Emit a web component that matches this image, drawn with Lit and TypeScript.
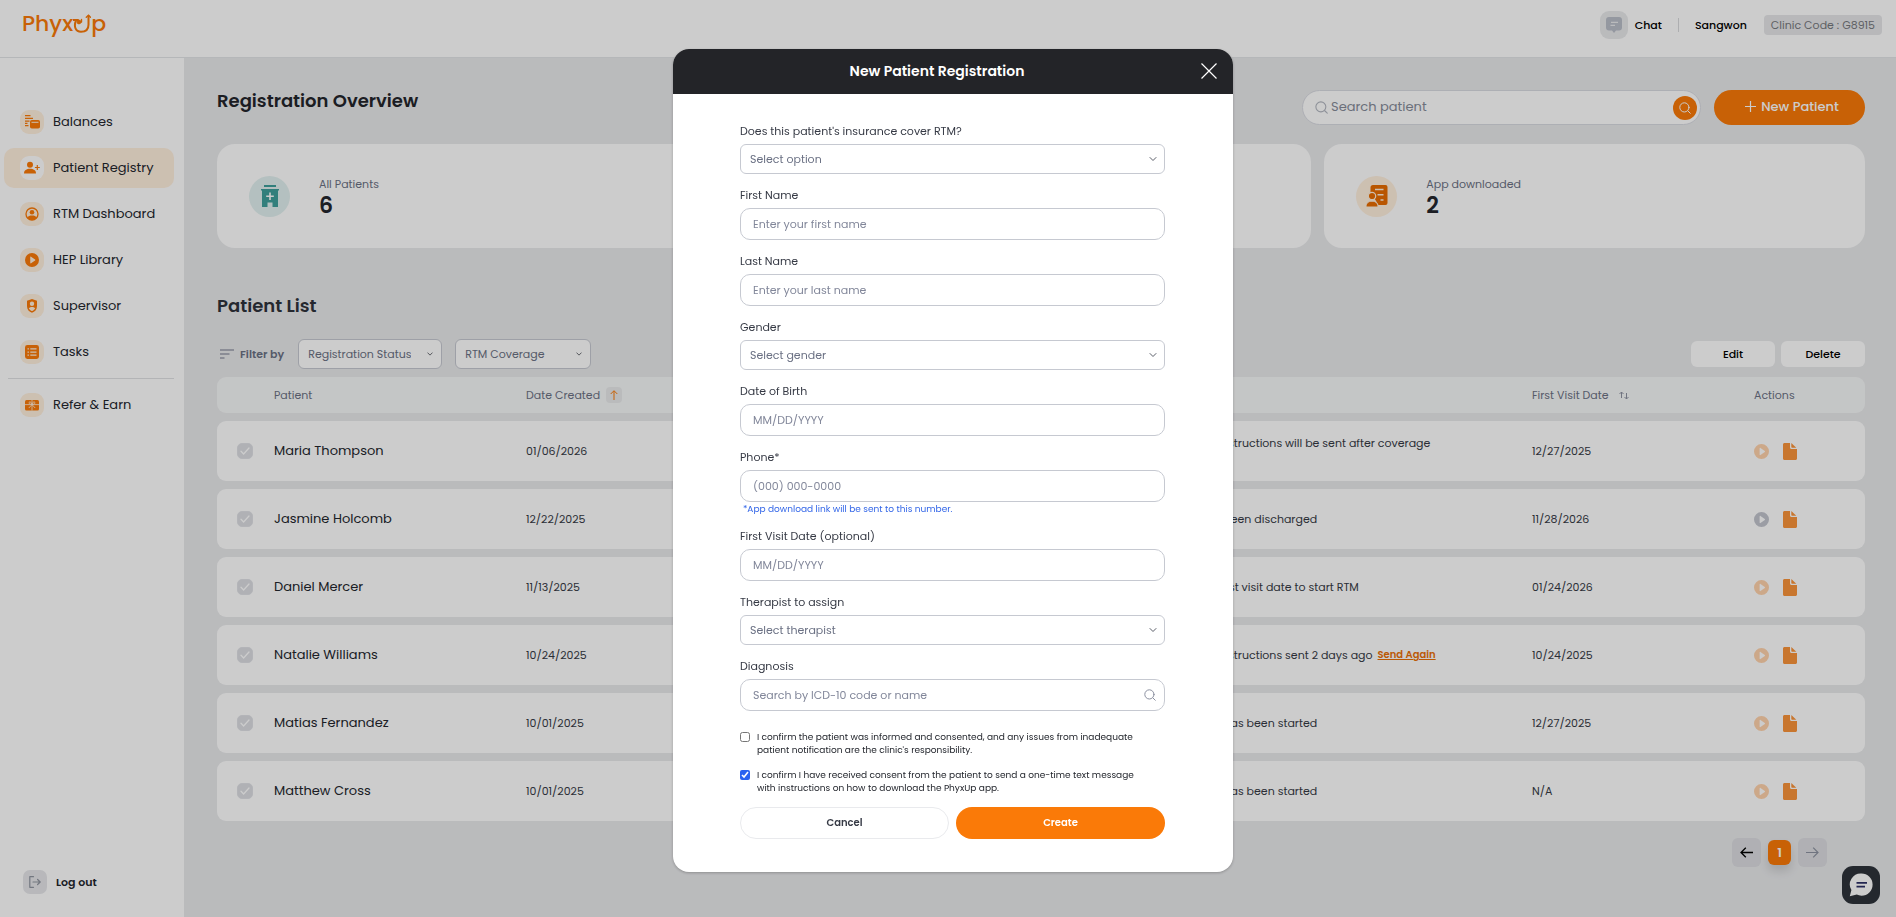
import { LitElement, html, svg, css, nothing, type TemplateResult } from "lit";
import { customElement } from "lit/decorators.js";
import { classMap } from "lit/directives/class-map.js";

interface NavItem {
  label: string;
  icon: TemplateResult;
  active?: boolean;
}

interface Patient {
  name: string;
  created: string;
  status: string;
  visit: string;
  resend?: boolean;
  discharged?: boolean;
}

interface Field {
  id: string;
  label: string;
  kind: "select" | "text" | "search";
  hint: string;
  note?: string;
}

const patients: Patient[] = [
  { name: "Maria Thompson", created: "01/06/2026", status: "App download instructions will be sent after coverage is confirmed", visit: "12/27/2025" },
  { name: "Jasmine Holcomb", created: "12/22/2025", status: "The patient has been discharged", visit: "11/28/2026", discharged: true },
  { name: "Daniel Mercer", created: "11/13/2025", status: "Waiting for the first visit date to start RTM", visit: "01/24/2026" },
  { name: "Natalie Williams", created: "10/24/2025", status: "App download instructions sent 2 days ago", visit: "10/24/2025", resend: true },
  { name: "Matias Fernandez", created: "10/01/2025", status: "RTM monitoring has been started", visit: "12/27/2025" },
  { name: "Matthew Cross", created: "10/01/2025", status: "RTM monitoring has been started", visit: "N/A" },
];

const fields: Field[] = [
  { id: "coverage", label: "Does this patient's insurance cover RTM?", kind: "select", hint: "Select option" },
  { id: "first", label: "First Name", kind: "text", hint: "Enter your first name" },
  { id: "last", label: "Last Name", kind: "text", hint: "Enter your last name" },
  { id: "gender", label: "Gender", kind: "select", hint: "Select gender" },
  { id: "birth", label: "Date of Birth", kind: "text", hint: "MM/DD/YYYY" },
  { id: "phone", label: "Phone*", kind: "text", hint: "(000) 000-0000", note: "*App download link will be sent to this number." },
  { id: "visit", label: "First Visit Date (optional)", kind: "text", hint: "MM/DD/YYYY" },
  { id: "therapist", label: "Therapist to assign", kind: "select", hint: "Select therapist" },
  { id: "diagnosis", label: "Diagnosis", kind: "search", hint: "Search by ICD-10 code or name" },
];

const icon = (size: number, body: TemplateResult, height = size) =>
  html`<svg width=${size} height=${height} viewBox="0 0 ${size} ${height}" fill="currentColor" aria-hidden="true">${body}</svg>`;

const chevron = (size: number) =>
  html`<svg class="chevron" width=${size} height=${size} viewBox="0 0 8 8" fill="none" stroke="currentColor" stroke-width="1" stroke-linecap="round" stroke-linejoin="round" aria-hidden="true"><path d="M1 2.5 4 5.5 7 2.5" /></svg>`;

const magnifier = (size: number) =>
  html`<svg width=${size} height=${size} viewBox="0 0 12 12" fill="none" stroke="currentColor" stroke-width="1" stroke-linecap="round" aria-hidden="true"><circle cx="5.4" cy="5.4" r="4.6" /><path d="M9 9l2.3 2.3" /></svg>`;

const play = (size: number) =>
  html`<svg width=${size} height=${size} viewBox="0 0 16 16" fill="currentColor" aria-hidden="true"><path fill-rule="evenodd" d="M8 0a8 8 0 1 0 0 16A8 8 0 0 0 8 0ZM6 4.7v6.6c0 .5.5.7.9.5l4.6-3.2c.4-.3.4-.9 0-1.200L6.900 4.200c-.4-.2-.9 0-.9.5Z" /></svg>`;

const navItems: NavItem[] = [
  {
    label: "Balances",
    icon: icon(16, svg`<path d="M1 1h5.500v1.200H1zM1 3.800h8v1.200H1zM1 6.500h4.500v1.200H1zM1 8.800h2.500V10H1zM1 11.100h3.500v1.200H1z"/><rect x="6" y="6" width="10" height="8.600" rx="1.800"/><path d="M7.500 8.300h7" stroke="#fff0de" stroke-width="1"/>`),
  },
  {
    label: "Patient Registry",
    active: true,
    icon: icon(16, svg`<circle cx="6" cy="4.800" r="3"/><path d="M0 13.500c0-3.200 2.600-4.700 6-4.700s6 1.500 6 4.700Z"/><path d="M13.300 5v5M10.900 7.500h4.900" stroke="currentColor" stroke-width="1.200"/>`),
  },
  {
    label: "RTM Dashboard",
    icon: icon(14, svg`<circle cx="7" cy="7" r="6" fill="none" stroke="currentColor" stroke-width="1.300"/><circle cx="7" cy="5.300" r="2.300"/><path d="M2.300 10.800C3 8.900 4.800 8.400 7 8.400s4 .5 4.700 2.400C10.800 12.400 9 13 7 13s-3.800-.6-4.700-2.200Z"/>`),
  },
  { label: "HEP Library", icon: play(14) },
  {
    label: "Supervisor",
    icon: icon(14, svg`<path fill-rule="evenodd" d="M7 0 12 1.800v5.400c0 3.400-2.200 5.600-5 6.600-2.800-1-5-3.200-5-6.600V1.800L7 0Zm0 2.500a2.200 2.200 0 1 0 0 4.400 2.200 2.200 0 0 0 0-4.400ZM3.800 9.200C4.600 10.800 5.700 11.600 7 12c1.300-.4 2.400-1.200 3.200-2.800C9.300 8.300 8.200 8 7 8s-2.300.3-3.200 1.200Z"/>`),
  },
  {
    label: "Tasks",
    icon: icon(14, svg`<path fill-rule="evenodd" d="M2.400 0h9.200A2.400 2.400 0 0 1 14 2.400v9.200a2.400 2.400 0 0 1-2.400 2.400H2.400A2.400 2.400 0 0 1 0 11.600V2.400A2.400 2.400 0 0 1 2.400 0ZM2.500 3.300v1.300h1.400V3.300Zm2.800 0v1.300h6.200V3.300ZM2.500 6.400v1.300h1.400V6.400Zm2.800 0v1.300h6.200V6.400ZM2.500 9.500v1.300h1.400V9.500Zm2.800 0v1.300h6.200V9.500Z"/>`),
  },
];

const referItem: NavItem = {
  label: "Refer & Earn",
  icon: icon(14, svg`<rect x="0" y="2" width="14" height="10.500" rx="1.500"/><path d="M7 2v10.500M0 6.600h14M7 6.600 3.800 10M7 6.600 10.200 10M7 6.300C5 6.300 3.600 5.500 4.100 4.400 4.700 3.300 6.600 4.100 7 6.300c.4-2.200 2.300-3 2.900-1.900C10.400 5.500 9 6.300 7 6.300Z" fill="none" stroke="#fff0de" stroke-width=".8"/>`),
};

@customElement("app-root")
export class AppRoot extends LitElement {
  static styles = css`
    :host {
      --ink: #23262d;
      --text: #363a45;
      --muted: #6b7184;
      --line: #c6c9d1;
      --brand: #fa7a08;
      --canvas: #e9eaec;
      display: block;
      min-height: 100vh;
      font-family: Poppins, Inter, sans-serif;
      font-size: 11px;
      color: var(--ink);
    }
    *, *::before, *::after { box-sizing: border-box; }
    h1, h2, p, ul { margin: 0; padding: 0; }
    button, input, select { font: inherit; color: inherit; margin: 0; }
    button { border: 0; padding: 0; cursor: pointer; display: inline-flex; align-items: center; justify-content: center; background: none; }
    svg { display: block; flex: none; }

    .app { display: flex; flex-direction: column; min-height: 100vh; background: var(--canvas); }
    .topbar { display: flex; align-items: flex-start; justify-content: space-between; height: 58px; padding: 12px 14px 0 22px; background: #fff; border-bottom: 1px solid #e3e5e8; }
    .logo { display: flex; align-items: center; color: var(--brand); font-size: 22px; line-height: 24px; font-weight: 500; }
    .account { display: flex; align-items: center; height: 26px; font-weight: 500; line-height: 18px; color: #000; }
    .chat { gap: 7px; font-weight: 500; }
    .chat-icon { display: grid; place-items: center; width: 28px; height: 28px; border-radius: 9px; background: #e9eaec; color: #b9bec9; }
    .rule { width: 1px; height: 14px; margin: 0 16px; background: #d9dadd; }
    .code { margin-left: 17px; padding: 1px 7px; border-radius: 4px; background: #e6e7e9; color: #76787d; font-weight: 400; }

    .body { flex: 1; display: flex; }
    .sidebar { display: flex; flex-direction: column; justify-content: space-between; width: 184px; padding: 44px 10px 23px 4px; background: #fff; }
    .nav { display: flex; flex-direction: column; gap: 6px; list-style: none; }
    .nav-link { display: flex; align-items: center; gap: 9px; height: 40px; padding: 0 16px; border-radius: 10px; color: var(--ink); text-decoration: none; font-size: 13px; line-height: 20px; }
    .nav-link.active { background: #fff0de; }
    .badge { display: grid; place-items: center; flex: none; width: 24px; height: 24px; border-radius: 9px; background: #fff0de; color: var(--brand); }
    .active .badge { background: #fff; }
    .nav-rule { height: 1px; margin: 0 0 0 4px; background: #e0e2e4; }
    .logout { align-self: flex-start; gap: 9px; margin-left: 19px; font-weight: 600; }
    .logout-icon { display: grid; place-items: center; width: 24px; height: 24px; border-radius: 7px; background: #e6e7ea; color: #9095a0; }

    .main { flex: 1; min-width: 0; padding: 32px 31px 0 33px; }
    .heading { display: flex; justify-content: space-between; align-items: flex-start; }
    .title { font-size: 18px; line-height: 22px; font-weight: 600; color: #23252b; }
    .tools { display: flex; gap: 13px; }
    .search { display: flex; align-items: center; gap: 3px; width: 399px; height: 35px; padding: 0 3px 0 12px; border: 1px solid #d9dbe2; border-radius: 18px; background: #fff; color: #b2b6c0; }
    .search-input { flex: 1; min-width: 0; border: 0; padding: 0 0 2px; background: none; outline: 0; font-size: 13px; color: var(--ink); }
    .search-input::placeholder { color: #868b99; opacity: 1; }
    .search-go { width: 24px; height: 24px; border-radius: 12px; background: var(--brand); color: #fff; }
    .new { gap: 5px; width: 151px; height: 35px; padding: 0 0 2px 5px; border-radius: 18px; background: var(--brand); color: #fff; font-size: 13px; font-weight: 500; }

    .cards { display: grid; grid-template-columns: repeat(3, 1fr); gap: 13px; margin-top: 19px; }
    .card { display: flex; align-items: center; gap: 29px; min-height: 104px; padding: 0 32px; border-radius: 18px; background: #fff; }
    .disc { display: grid; place-items: center; width: 41px; height: 41px; border-radius: 50%; background: #fff0de; color: #e86c00; }
    .disc.teal { background: #e2f1f0; color: #3f9f9c; }
    .card-label { line-height: 18px; color: var(--muted); }
    .card-value { font-size: 22px; line-height: 25px; font-weight: 600; }

    .list-title { margin-top: 47px; color: #2f323b; }
    .filters { display: flex; align-items: center; margin-top: 22px; height: 30px; }
    .filter-by { display: flex; align-items: center; gap: 6px; margin: 0 14px 0 3px; font-weight: 600; color: var(--muted); }
    .picker { display: grid; align-items: center; }
    .picker > * { grid-area: 1 / 1; }
    .picker > .chevron, .picker > .lens { justify-self: end; pointer-events: none; }
    .drop { appearance: none; width: 100%; height: 100%; border: 1px solid var(--line); border-radius: 6px; background: #fff; color: var(--muted); outline: 0; }
    .filter { height: 30px; margin-right: 13px; }
    .filter .drop { padding: 0 30px 0 9px; }
    .filter .chevron { margin-right: 9px; color: #3a3d45; }
    .filter.status { width: 144px; }
    .filter.coverage { width: 136px; }
    .bulk { display: flex; gap: 6px; margin-left: auto; }
    .bulk-button { width: 84px; height: 26px; border-radius: 6px; background: #fff; color: #000; font-weight: 500; }

    .table { width: 100%; table-layout: fixed; border-collapse: separate; border-spacing: 0 8px; }
    .col-check { width: 57px; }
    .col-name { width: 252px; }
    .col-created { width: 249px; }
    .col-status { width: 397px; }
    .col-visit { width: 222px; }
    .col-actions { width: 111px; }
    .table th { height: 36px; padding: 0; background: #f6f8f8; color: var(--muted); font-weight: 400; text-align: left; }
    .table td { height: 60px; padding: 0; background: #fff; color: var(--text); line-height: 16px; }
    .table th:first-child, .table td:first-child { border-radius: 9px 0 0 9px; }
    .table th:last-child, .table td:last-child { border-radius: 0 9px 9px 0; }
    .table .name { font-size: 13px; color: var(--ink); }
    .sort { display: inline-flex; align-items: center; gap: 6px; }
    .sort-on { width: 16px; height: 16px; border-radius: 4px; background: #e9eaec; color: var(--brand); }
    .sort-off { color: #8d92a1; margin-left: 4px; }
    .status-text { display: inline-block; max-width: 300px; vertical-align: middle; }
    .resend { margin-left: 2px; color: #ea6f06; font-size: 10px; font-weight: 600; text-decoration: underline; vertical-align: middle; }
    .tick { display: grid; place-items: center; width: 16px; height: 16px; margin-left: 20px; color: #fff; }
    .tick > * { grid-area: 1 / 1; }
    .tick-box { appearance: none; width: 16px; height: 16px; border: 1px solid #e0e2e7; border-radius: 5px; background: #dcdee3; }
    .actions { display: flex; align-items: center; gap: 14px; }
    .play { color: #ffd3ac; }
    .play.off { color: #c2c5ce; }
    .file { color: #fb943a; }

    .pager { display: flex; justify-content: flex-end; align-items: center; gap: 7px; margin: 9px 38px 40px 0; }
    .page-step { width: 29px; height: 29px; border-radius: 6px; background: #dcdde1; color: #8d92a1; }
    .page-step.ready { color: #000; }
    .page-now { width: 23px; height: 25px; border-radius: 6px; background: var(--brand); color: #fff; font-size: 13px; font-weight: 600; box-shadow: 0 6px 10px #00000020; }

    .launcher { position: fixed; right: 16px; bottom: 13px; width: 38px; height: 38px; border-radius: 11px; background: #2e333a; color: #fff; }

    .overlay { position: fixed; inset: 0; display: flex; align-items: flex-start; justify-content: center; padding: 49px 0 0 10px; background: #00000033; overflow: auto; }
    .dialog { width: 560px; overflow: hidden; border-radius: 16px; background: #fff; box-shadow: 0 1px 3px #00000040; }
    .dialog-head { display: flex; align-items: center; height: 45px; padding: 0 16px 1px 0; background: #232428; color: #fff; }
    .dialog-title { flex: 1; text-align: center; font-size: 14px; line-height: 20px; font-weight: 600; }
    .form { display: flex; flex-direction: column; gap: 12px; padding: 28px 68px 33px 67px; }
    .field { display: flex; flex-direction: column; color: var(--text); }
    .field-label { margin-bottom: 4px; line-height: 18px; }
    .field .drop { height: 30px; padding: 0 24px 0 9px; }
    .field .chevron { margin-right: 8px; color: #5a5e69; }
    .box { width: 100%; height: 32px; border: 1px solid var(--line); border-radius: 10px; padding: 0 12px; background: #fff; outline: 0; }
    .box::placeholder { color: #82879a; opacity: 1; }
    .lens { margin-right: 9px; color: #8b90a0; }
    .note { padding: 2px 0 0 3px; font-size: 9px; line-height: 11px; color: #3467e8; }
    .consents { display: flex; flex-direction: column; gap: 12px; margin-top: 8px; }
    .consent { display: flex; align-items: flex-start; gap: 7px; padding-right: 12px; font-size: 9px; line-height: 13px; }
    .consent-box { flex: none; width: 10px; height: 10px; margin-top: 1px; accent-color: #2962f0; }
    .buttons { display: grid; grid-template-columns: 1fr 1fr; gap: 7px; }
    .pill { height: 32px; border-radius: 16px; font-size: 10px; font-weight: 600; }
    .cancel { border: 1px solid #e9eaed; background: #fff; color: var(--text); }
    .create { background: var(--brand); color: #fff; }
  `;

  private navLink(item: NavItem) {
    return html`<li>
      <a class=${classMap({ "nav-link": true, active: !!item.active })} href="#">
        <span class="badge">${item.icon}</span>${item.label}
      </a>
    </li>`;
  }

  private row(p: Patient) {
    return html`<tr>
      <td>
        <label class="tick">
          <input class="tick-box" type="checkbox" checked disabled aria-label=${p.name} />
          <svg width="10" height="8" viewBox="0 0 10 8" fill="none" stroke="currentColor" stroke-width="1.300" stroke-linecap="round" aria-hidden="true"><path d="M1 4.300 3.600 7 9 1" /></svg>
        </label>
      </td>
      <td class="name">${p.name}</td>
      <td>${p.created}</td>
      <td></td>
      <td>
        <span class="status-text">${p.status}</span>
        ${p.resend ? html`<a class="resend" href="#">Send Again</a>` : nothing}
      </td>
      <td>${p.visit}</td>
      <td>
        <div class="actions">
          <button class=${classMap({ play: true, off: !!p.discharged })} aria-label="Play">${play(15)}</button>
          <button class="file" aria-label="Document">
            ${icon(14, svg`<path d="M1.500 0H7v4.500C7 5.300 7.700 6 8.500 6H14v9.500c0 .8-.7 1.500-1.500 1.500h-11C.7 17 0 16.300 0 15.500v-14C0 .7.700 0 1.500 0Z"/><path d="M8.300 0 13.300 4.800H9.300c-.6 0-1-.4-1-1Z"/>`, 17)}
          </button>
        </div>
      </td>
    </tr>`;
  }

  private control(f: Field) {
    if (f.kind === "select") {
      return html`<div class="picker">
        <select class="drop" id=${f.id}><option>${f.hint}</option></select>${chevron(8)}
      </div>`;
    }
    return html`<div class="picker">
      <input class="box" id=${f.id} type="text" placeholder=${f.hint} />
      ${f.kind === "search" ? html`<span class="lens">${magnifier(12)}</span>` : nothing}
    </div>`;
  }

  private field(f: Field) {
    return html`<div class="field">
      <label class="field-label" for=${f.id}>${f.label}</label>
      ${this.control(f)} ${f.note ? html`<p class="note">${f.note}</p>` : nothing}
    </div>`;
  }

  private topbar() {
    return html`<header class="topbar">
      <div class="logo" aria-label="PhyxUp">
        <span>Phyx</span>
        <svg width="18" height="24" viewBox="0 0 18 24" fill="none" stroke="currentColor" stroke-width="2" stroke-linecap="round" aria-hidden="true">
          <path d="M.500 8h4.500M3 8.500c-2.500 6-.5 11.300 5 11.300s7.500-3 7.500-7V4" />
          <circle cx="6" cy="10" r="1.900" fill="currentColor" stroke-width="1" />
          <path d="M8.500 10V7.500M13.300 5.300 15.500 3.300 17.500 5.300" stroke-width="1.400" />
        </svg>
        <span>p</span>
      </div>
      <div class="account">
        <button class="chat">
          <span class="chat-icon">${icon(16, svg`<path fill-rule="evenodd" d="M3 0h10a3 3 0 0 1 3 3v7.500a3 3 0 0 1-3 3h-3L8 16l-2-2.500H3a3 3 0 0 1-3-3V3a3 3 0 0 1 3-3Zm2 4.800v1.200h7V4.800ZM4.500 7.800V9H9V7.800Z"/>`)}</span>Chat
        </button>
        <span class="rule"></span>
        <span>Sangwon</span>
        <span class="code">Clinic Code : G8915</span>
      </div>
    </header>`;
  }

  private sidebar() {
    return html`<aside class="sidebar">
      <ul class="nav">
        ${navItems.map((item) => this.navLink(item))}
        <li class="nav-rule" role="separator"></li>
        ${this.navLink(referItem)}
      </ul>
      <button class="logout">
        <span class="logout-icon">
          <svg width="12" height="12" viewBox="0 0 12 12" fill="none" stroke="currentColor" stroke-width="1.200" stroke-linecap="round" stroke-linejoin="round" aria-hidden="true"><path d="M4.500.700H.800v10.600H4.500M4 6h7M8.600 3.500 11.200 6 8.600 8.500" /></svg>
        </span>
        Log out
      </button>
    </aside>`;
  }

  private main() {
    return html`<main class="main">
      <div class="heading">
        <h1 class="title">Registration Overview</h1>
        <div class="tools">
          <div class="search">
            ${magnifier(13)}
            <input class="search-input" type="text" placeholder="Search patient" aria-label="Search patient" />
            <button class="search-go" aria-label="Search">${magnifier(12)}</button>
          </div>
          <button class="new">
            <svg width="11" height="11" viewBox="0 0 11 11" stroke="currentColor" stroke-width="1.200" aria-hidden="true"><path d="M5.500 0v11M0 5.500h11" /></svg>
            New Patient
          </button>
        </div>
      </div>

      <section class="cards">
        <div class="card">
          <span class="disc teal">
            <svg width="18" height="22" viewBox="0 0 18 22" fill="currentColor" aria-hidden="true">
              <path d="M3 0h12v2H3zM0 4h18v1.500h-1V22h-5.500v-4.500h-5V22H1V5.500H0Z" />
              <path d="M9 7.500v7.600M5.200 11.300h7.600" stroke="#fff" stroke-width="1.600" />
            </svg>
          </span>
          <div><p class="card-label">All Patients</p><p class="card-value">6</p></div>
        </div>
        <div class="card"></div>
        <div class="card">
          <span class="disc">
            <svg width="22" height="22" viewBox="0 0 22 22" fill="currentColor" aria-hidden="true">
              <path d="M7 0h12.500A2 2 0 0 1 21.500 2v16a2 2 0 0 1-2 2H12.500L4.500 7V2.500A2.500 2.500 0 0 1 7 0Z" />
              <path d="M9 4.500h8.500M11.500 9.800h6M14.500 15h3" stroke="#fff0de" stroke-width="1.400" />
              <circle cx="6" cy="11" r="3.700" stroke="#fff0de" stroke-width="1.200" />
              <path d="M0 22c0-4 2.600-5.800 6-5.800s6 1.800 6 5.800Z" stroke="#fff0de" stroke-width="1" />
            </svg>
          </span>
          <div><p class="card-label">App downloaded</p><p class="card-value">2</p></div>
        </div>
      </section>

      <h2 class="title list-title">Patient List</h2>
      <div class="filters">
        <span class="filter-by">
          <svg width="14" height="10" viewBox="0 0 14 10" stroke="#9a9fac" stroke-width="1.500" aria-hidden="true"><path d="M0 1h14M0 5h9.500M0 9h4.500" /></svg>
          Filter by
        </span>
        <div class="picker filter status">
          <select class="drop" aria-label="Registration Status"><option>Registration Status</option></select>${chevron(6)}
        </div>
        <div class="picker filter coverage">
          <select class="drop" aria-label="RTM Coverage"><option>RTM Coverage</option></select>${chevron(6)}
        </div>
        <div class="bulk">
          <button class="bulk-button">Edit</button>
          <button class="bulk-button">Delete</button>
        </div>
      </div>

      <table class="table">
        <colgroup>
          <col class="col-check" /><col class="col-name" /><col class="col-created" /><col /><col class="col-status" /><col class="col-visit" /><col class="col-actions" />
        </colgroup>
        <thead>
          <tr>
            <th></th>
            <th>Patient</th>
            <th>
              <span class="sort">Date Created
                <button class="sort-on" aria-label="Sort by date created">
                  <svg width="8" height="10" viewBox="0 0 8 10" fill="none" stroke="currentColor" stroke-width="1" aria-hidden="true"><path d="M4 10V1M.700 4 4 .700 7.300 4" /></svg>
                </button>
              </span>
            </th>
            <th></th>
            <th></th>
            <th>
              <span class="sort">First Visit Date
                <button class="sort-off" aria-label="Sort by first visit date">
                  <svg width="10" height="9" viewBox="0 0 10 9" fill="none" stroke="currentColor" stroke-width="1" aria-hidden="true"><path d="M2.500 7V1M.500 3l2-2 2 2M7.500 2v6M5.500 6l2 2 2-2" /></svg>
                </button>
              </span>
            </th>
            <th>Actions</th>
          </tr>
        </thead>
        <tbody>
          ${patients.map((p) => this.row(p))}
        </tbody>
      </table>

      <nav class="pager" aria-label="Pages">
        <button class="page-step ready" aria-label="Previous page">
          <svg width="13" height="11" viewBox="0 0 13 11" fill="none" stroke="currentColor" stroke-width="1.300" aria-hidden="true"><path d="M13 5.500H1M5.800.700 1 5.500l4.800 4.800" /></svg>
        </button>
        <button class="page-now">1</button>
        <button class="page-step" aria-label="Next page">
          <svg width="13" height="11" viewBox="0 0 13 11" fill="none" stroke="currentColor" stroke-width="1.200" aria-hidden="true"><path d="M0 5.500h12M7.200.700 12 5.500l-4.800 4.800" /></svg>
        </button>
      </nav>
    </main>`;
  }

  private dialog() {
    return html`<div class="overlay">
      <section class="dialog" role="dialog" aria-modal="true" aria-labelledby="dialog-title">
        <header class="dialog-head">
          <h2 class="dialog-title" id="dialog-title">New Patient Registration</h2>
          <button aria-label="Close">
            <svg width="16" height="16" viewBox="0 0 16 16" stroke="currentColor" stroke-width="1.200" aria-hidden="true"><path d="M.500.500l15 15M15.500.500l-15 15" /></svg>
          </button>
        </header>
        <form class="form" @submit=${(e: Event) => e.preventDefault()}>
          ${fields.map((f) => this.field(f))}
          <div class="consents">
            <label class="consent">
              <input class="consent-box" type="checkbox" />
              <span>I confirm the patient was informed and consented, and any issues from inadequate patient notification are the clinic's responsibility.</span>
            </label>
            <label class="consent">
              <input class="consent-box" type="checkbox" checked />
              <span>I confirm I have received consent from the patient to send a one-time text message with instructions on how to download the PhyxUp app.</span>
            </label>
          </div>
          <div class="buttons">
            <button class="pill cancel" type="button">Cancel</button>
            <button class="pill create" type="submit">Create</button>
          </div>
        </form>
      </section>
    </div>`;
  }

  render() {
    return html`
      <div class="app">
        ${this.topbar()}
        <div class="body">${this.sidebar()} ${this.main()}</div>
        <button class="launcher" aria-label="Open messages">
          <svg width="24" height="24" viewBox="0 0 24 24" fill="currentColor" aria-hidden="true">
            <path d="M12.500.500a11 11 0 0 1 0 22.200c-1.800 0-3.300-.4-4.700-1.100L.800 23.300l1.600-6.200A11 11 0 0 1 12.500.500Z" />
            <path d="M7.500 9.800h10.500M7.500 13.600h8.500" stroke="#2c2f66" stroke-width="1.700" />
          </svg>
        </button>
      </div>
      ${this.dialog()}
    `;
  }
}
